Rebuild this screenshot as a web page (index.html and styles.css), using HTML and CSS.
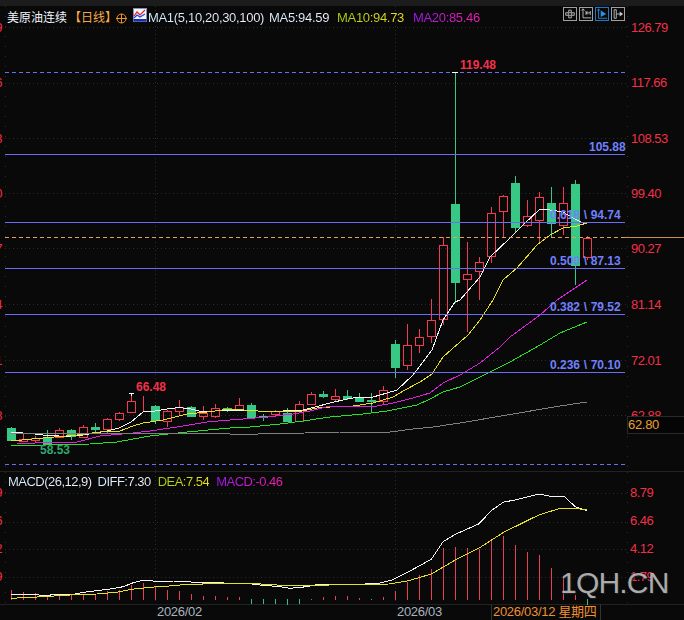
FILE: index.html
```html
<!DOCTYPE html>
<html lang="zh-CN">
<head>
<meta charset="utf-8">
<title>美原油连续 日线</title>
<link rel="stylesheet" href="styles.css">
</head>
<body>
<div class="app">
  <div class="topband"></div>
  <section class="pane price-pane">
    <div class="legend">
      <span class="title">美原油连续</span>
      <span class="period">【日线】</span>
      <svg class="ico-target" viewBox="0 0 11 11"><circle cx="5.5" cy="5.5" r="4.5"/><path d="M0 5.5H11M5.5 1V10"/></svg>
      <svg class="ico-ma" viewBox="0 0 14 14"><rect class="f" x=".5" y=".5" width="13" height="13"/><rect class="b" x=".5" y="11" width="13" height="2.5"/><path class="r" d="M1 8L4 4L7 7L12 2"/><path class="u" d="M1 10L4 7L7 9L12 6"/></svg>
      <span class="lg lg-ma1">MA1(5,10,20,30,100)</span>
      <span class="lg lg-ma5">MA5:94.59</span>
      <span class="lg lg-ma10">MA10:94.73</span>
      <span class="lg lg-ma20">MA20:85.46</span>
    </div>
    <div class="tools">
      <span class="tool"><svg viewBox="0 0 14 14"><path d="M5.5 2.500h3v3h-3zM5.500 8.500h3v3h-3zM2 5.500h3v3H2zM9 5.500h3v3H9z"/></svg></span>
      <span class="tool"><svg viewBox="0 0 14 14"><path d="M3.500 1V11.500H13M1.500 3L3.500 1L5.500 3M7 3.500V8M12 3.500V8M7 5.750H12M9 4L7.500 5.750L9 7.500"/></svg></span>
      <span class="tool tool-on"><svg viewBox="0 0 14 14"><path d="M3 1V12H13M1.500 3L3 1L4.500 3"/><path class="solid" d="M5.500 3L12 7L5.500 10.500Z"/></svg></span>
      <span class="tool"><svg viewBox="0 0 14 14"><path d="M2.500 2V12M5 2V12M2.500 2H5M2.500 12H5M5 7H11"/><path class="solid" d="M9 4L13 7L9 10Z"/></svg></span>
    </div>
    <svg class="chart chart-main" viewBox="0 6 684 466">
      <g class="grid">
        <path d="M5 27H627M5 83H627M5 138H627M5 193H627M5 248H627M5 304H627M5 360H627M5 415H627"/>
        <path d="M155 6V472M395 6V472"/>
      </g>
      <path class="axis" d="M5 6V472M627 6V472"/>
      <path class="rule" d="M0 471.500H684"/>
      <g id="candles"></g>
      <g id="mas"></g>
      <path class="level" d="M5 154H625M5 222H625M5 268H625M5 314H625M5 372H625"/>
      <path class="level dashed" d="M5 72.500H625M5 464.500H625"/>
      <path class="cur-dash" d="M5 237.500H625"/>
      <path class="cur-solid" d="M625 237.500H684"/>
      <path class="cross" d="M131 393V396M128.500 393H134M452 72.500H458"/>
      <g class="scale">
        <text x="2" y="32" text-anchor="end">126.79</text><text x="2" y="87" text-anchor="end">117.66</text><text x="2" y="143" text-anchor="end">108.53</text><text x="2" y="198" text-anchor="end">99.40</text><text x="2" y="253" text-anchor="end">90.27</text><text x="2" y="309" text-anchor="end">81.14</text><text x="2" y="365" text-anchor="end">72.01</text><text x="2" y="420" text-anchor="end">62.88</text>
        <text x="631" y="32">126.79</text><text x="631" y="87">117.66</text><text x="631" y="143">108.53</text><text x="631" y="198">99.40</text><text x="631" y="253">90.27</text><text x="631" y="309">81.14</text><text x="631" y="365">72.01</text><text x="631" y="420">62.88</text>
      </g>
      <text class="peak" x="460" y="69">119.48</text>
      <text class="peak" x="136" y="391">66.48</text>
      <text class="low" x="40" y="454">58.53</text>
      <g class="fib">
        <text x="589" y="151">105.88</text>
        <text x="550" y="219">0.618 \ 94.74</text>
        <text x="550" y="265">0.500 \ 87.13</text>
        <text x="550" y="311">0.382 \ 79.52</text>
        <text x="550" y="369">0.236 \ 70.10</text>
      </g>
    </svg>
    <div class="last-box">62.80</div>
  </section>
  <section class="pane macd-pane">
    <div class="legend legend-macd">
      <span class="lg lg-ma1">MACD(26,12,9)</span>
      <span class="lg lg-ma1">DIFF:7.30</span>
      <span class="lg lg-ma10">DEA:7.54</span>
      <span class="lg lg-ma20">MACD:-0.46</span>
    </div>
    <svg class="chart chart-macd" viewBox="0 472 684 133">
      <g class="grid">
        <path d="M5 493H627M5 522H627M5 549H627M5 577H627"/>
        <path d="M155 472V605M395 472V605"/>
      </g>
      <path class="axis" d="M5 472V605M627 472V605"/>
      <path class="rule" d="M0 604.500H684"/>
      <g id="hist"></g>
      <g id="macdlines"></g>
      <g class="scale">
        <text x="2" y="497" text-anchor="end">8.79</text><text x="2" y="525" text-anchor="end">6.46</text><text x="2" y="553" text-anchor="end">4.12</text><text x="2" y="581" text-anchor="end">1.79</text>
        <text x="630" y="497">8.79</text><text x="630" y="525">6.46</text><text x="630" y="553">4.12</text><text x="630" y="581">1.79</text>
      </g>
    </svg>
  </section>
  <div class="time-axis">
    <span class="t-label t-feb">2026/02</span>
    <span class="t-label t-mar">2026/03</span>
    <span class="t-cursor">2026/03/12 星期四</span>
  </div>
  <div class="watermark">1QH.CN</div>
</div>
<script src="app.js"></script>
</body>
</html>
```
FILE: styles.css
```css
* { box-sizing: border-box; }
html, body { margin: 0; height: 100%; background: #090909; overflow: hidden; }
.app {
  position: relative; width: 684px; height: 620px; display: flex; flex-direction: column;
  background: #090909; font-family: "Liberation Sans", "Noto Sans CJK SC", sans-serif; font-size: 13px;
}
.topband { height: 6px; background: #1c1c1c; flex: none; }
.pane { position: relative; flex: none; }
.price-pane { height: 466px; }
.macd-pane { height: 133px; }
.chart { position: absolute; inset: 0; width: 684px; display: block; }
.chart-main { height: 466px; }
.chart-macd { height: 133px; }
.legend {
  position: absolute; z-index: 2; left: 7px; top: 4px; height: 16px; display: flex; align-items: center;
  white-space: nowrap; line-height: 16px;
}
.title { color: #f2f6ff; width: 60px; font-size: 12px; }
.period { color: #f5a94a; width: 47px; margin-left: 2px; font-size: 12px; }
.ico-target { width: 11px; height: 11px; fill: none; stroke: #e8952e; stroke-width: 1; flex: none; }
.ico-ma { width: 14px; height: 14px; margin-left: 6px; margin-top: -6px; flex: none; }
.ico-ma .f { fill: #f4f4ff; stroke: #8890b0; stroke-width: 1; }
.ico-ma .b { fill: #1730a8; }
.ico-ma .r { fill: none; stroke: #e02020; stroke-width: 1.2; }
.ico-ma .u { fill: none; stroke: #2244dd; stroke-width: 1.2; }
.lg { -webkit-background-clip: text; background-clip: text; color: transparent; letter-spacing: -.32px; }
.lg-ma1 { background-image: linear-gradient(90deg, #d4ecff, #f2f2ff); margin-left: 1px; }
.lg-ma5 { background-image: linear-gradient(90deg, #d4ecff, #f2f2ff); margin-left: 5px; }
.lg-ma10 { background-image: linear-gradient(90deg, #a5cc10, #f0e020); margin-left: 8px; }
.lg-ma20 { background-image: linear-gradient(90deg, #9a18e8, #f020a8); margin-left: 9px; }
.legend-macd { left: 7px; top: 2px; }
.legend-macd .lg { letter-spacing: -.52px; }
.legend-macd .lg-ma1 + .lg-ma1 { margin-left: 6px; }
.legend-macd .lg-ma10 { margin-left: 7px; }
.legend-macd .lg-ma20 { margin-left: 7px; }
.tools { position: absolute; z-index: 2; right: 59px; top: 1px; display: flex; gap: 2px; }
.tool { width: 14px; height: 14px; border: 1px solid #a0a0a0; display: flex; }
.tool svg { width: 100%; height: 100%; fill: none; stroke: #c8c8c8; stroke-width: 1; }
.tool .solid { fill: #c8c8c8; stroke: none; }
.tool-on { border-color: #1e78c8; }
.tool-on svg { stroke: #2c90e0; }
.tool-on .solid { fill: #2c90e0; }
.grid path { fill: none; stroke: #2c2c2c; stroke-width: 1; stroke-dasharray: 1 3; shape-rendering: crispEdges; }
.axis { fill: none; stroke: #2c2c2c; stroke-width: 1; stroke-dasharray: 1 9; shape-rendering: crispEdges; }
.rule { fill: none; stroke: #222; stroke-width: 1; shape-rendering: crispEdges; }
.level { fill: none; stroke: #6c6cf5; stroke-width: 1; shape-rendering: crispEdges; }
.level.dashed { stroke-dasharray: 4 3; }
.cur-dash { fill: none; stroke: #e8a050; stroke-dasharray: 4 3; shape-rendering: crispEdges; }
.cur-solid { fill: none; stroke: #c89048; shape-rendering: crispEdges; }
.cross { fill: none; stroke: #fff; shape-rendering: crispEdges; }
.scale text { fill: #f03048; font-size: 13px; letter-spacing: -.5px; }
.peak { fill: #f5304a; font-size: 12px; font-weight: 700; }
.low { fill: #2aa870; font-size: 12px; font-weight: 700; }
.fib text { fill: #7080ff; font-size: 12px; font-weight: 700; word-spacing: .3px; }
.c-up { fill: none; stroke: #f23a55; stroke-width: 1; shape-rendering: crispEdges; }
.c-dn { fill: #36c884; stroke: #36c884; stroke-width: 1; shape-rendering: crispEdges; }
.ma { fill: none; stroke-width: 1; shape-rendering: crispEdges; }
.hbar-up { stroke: #e84058; stroke-width: 1; shape-rendering: crispEdges; }
.hbar-dn { stroke: #38c080; stroke-width: 1; shape-rendering: crispEdges; }
.last-box {
  position: absolute; left: 627px; top: 410px; width: 57px; height: 18px; z-index: 2; background: #050505;
  border: 1px solid #2a2a2a; border-right: 0; color: #e8a030; line-height: 16px; letter-spacing: -.3px;
}
.time-axis { flex: none; height: 15px; position: relative; color: #a8b4c0; }
.t-label, .t-cursor { position: absolute; top: -1px; line-height: 16px; white-space: nowrap; letter-spacing: -.3px; }
.t-feb { left: 157px; }
.t-mar { left: 397px; }
.t-cursor { left: 491px; width: 110px; padding-left: 1px; color: #f09030; border-left: 1px solid #333; border-right: 1px solid #333; }
.watermark {
  position: absolute; left: 560px; top: 565px; z-index: 3; font-size: 30px; line-height: 36px; letter-spacing: -.8px;
  color: rgba(205, 205, 205, .82); text-shadow: 1px 1px 1px #222;
}
```
FILE: app.js
```js
var NS = "http://www.w3.org/2000/svg";
function add(parent, tag, attrs) {
  var el = document.createElementNS(NS, tag);
  for (var k in attrs) el.setAttribute(k, attrs[k]);
  parent.appendChild(el);
  return el;
}
function pts(a) {
  var s = [];
  for (var i = 0; i < a.length; i += 2) s.push(a[i] + "," + a[i + 1]);
  return s.join(" ");
}
/* bodyTop, bodyBottom, wickTop, wickBottom, direction (1 = up, 0 = down) */
var K = [
 [428,440,427,440,0],[439,441,433,442,1],[438,440,436,443,1],[437,443,430,443,0],[430,437,428,438,1],
 [430,436,429,440,0],[427,437,425,437,1],[427,429,423,433,0],[419,429,418,433,1],[413,419,412,421,1],
 [401,412,393,413,1],[400,400,396,412,1],[406,420,405,424,0],[411,421,410,427,1],[407,411,400,415,1],
 [407,416,406,417,0],[413,416,406,420,1],[408,416,404,418,1],[408,410,407,412,0],[405,409,398,411,1],
 [405,417,403,418,0],[416,417,414,421,0],[411,414,410,417,1],[413,421,408,422,0],[404,421,401,422,1],
 [394,404,392,405,1],[394,396,391,398,0],[396,399,389,401,1],[396,398,390,400,0],[398,401,393,402,0],
 [400,401,393,412,0],[390,401,386,404,1],[344,367,340,378,0],[345,365,324,370,1],[337,345,329,353,1],
 [320,336,299,343,1],[245,319,237,325,1],[204,282,72,303,0],[274,279,242,332,1],[262,271,257,300,1],
 [213,256,207,263,1],[196,211,195,238,1],[183,227,176,233,0],[216,225,200,227,1],[197,220,192,242,1],
 [203,223,187,238,0],[203,225,187,235,1],[184,265,180,285,0],[238,257,236,260,1]
];
var g = document.getElementById("candles");
K.forEach(function (c, i) {
  var x = 11 + 12 * i;
  var cls = c[4] ? "c-up" : "c-dn";
  add(g, "path", { "class": cls, d: "M" + (x + .5) + " " + c[2] + "V" + c[0] + "M" + (x + .5) + " " + c[1] + "V" + c[3] });
  add(g, "rect", { "class": cls, x: x - 3.5, y: c[0] + .5, width: 8, height: Math.max(c[1] - c[0], 0) });
});
var MA = {
 "#f4f4f4": [11,432,23,433,35,434,47,435.500,59,436,71,436,83,435,95,433,107,431,119,428,131,422,143,412,155,411,167,409,179,407.500,191,409,203,412,215,411,230,410,258,411,283,411,303,410,315,407,330,403,347,399,360,397,373,397,387,393,397,390,413,375,432,350,443,320,455,302,460,300,480,277,490,257,510,238,523,225,540,209,550,210,563,212,573,218,583,223,587,223],
 "#e8e020": [11,441,43,438,77,435,100,432,120,431,133,426,143,423,163,420,187,414,207,412,230,409,258,411,282,411,302,411,317,408,330,407,353,406,373,403,393,397,405,390,420,382,432,374,443,357,460,342,468,335,480,320,493,300,503,280,517,268,537,245,550,235,563,228,577,226,587,223],
 "#e020e0": [17,444,53,442,77,442,100,436,133,433,150,431,177,427,207,422,230,420,243,419,267,417,293,414,310,411,330,406,353,406,377,406,393,403,413,398,430,393,443,383,460,375,480,363,500,347,510,337,540,315,557,300,587,280],
 "#28e028": [11,445,43,445,90,444,117,442,150,436,187,432,230,428,250,427,280,424,303,421,330,417,363,414,387,411,417,405,430,399,443,392,460,387,480,377,510,362,540,345,560,333,587,322],
 "#808080": [11,433,230,434,258,434,305,433,340,432,390,432,413,429,433,427,460,423,560,406,587,402]
};
var m = document.getElementById("mas");
for (var col in MA) add(m, "polyline", { "class": "ma", stroke: col, points: pts(MA[col]) });

/* histogram tops, in 3x zoom units of the 470 based crop */
var H = [360,366,368,376,372,376,372,372,364,360,345,340,352,360,362,372,378,378,381,381,-402,-402,-402,-405,-402,386,382,378,378,384,-390,380,362,335,316,298,235,231,234,238,214,198,225,246,255,294,320,375,-405];
var h = document.getElementById("hist");
H.forEach(function (v, i) {
  var x = 11.5 + 12 * i;
  var y = 470 + Math.abs(v) / 3;
  add(h, "line", { "class": v < 0 ? "hbar-dn" : "hbar-up", x1: x, x2: x, y1: v < 0 ? 599 : 599.500, y2: y });
});
var W = [33,373,110,373,125,378,160,374,220,373,250,367,290,362,330,357,370,350,400,338,430,331,460,333,520,333,560,335,600,338,740,340,780,345,840,350,870,355,920,350,950,344,1026,342,1096,342,1136,340,1176,330,1226,305,1294,268,1329,215,1366,193,1436,162,1476,120,1511,96,1546,90,1616,72,1646,78,1691,78,1726,110,1762,122];
var Y = [33,385,130,380,210,375,290,372,350,367,395,358,450,352,520,347,560,343,720,340,810,343,850,347,950,346,1026,344,1166,342,1226,332,1294,312,1366,270,1436,235,1511,187,1616,135,1681,115,1726,115,1762,120];
function zoomPts(a) {
  var o = [];
  for (var i = 0; i < a.length; i += 2) o.push(+(a[i] / 3).toFixed(1), +(470 + a[i + 1] / 3).toFixed(1));
  return pts(o);
}
var ml = document.getElementById("macdlines");
add(ml, "polyline", { "class": "ma", stroke: "#f4f4f4", points: zoomPts(W) });
add(ml, "polyline", { "class": "ma", stroke: "#e8e020", points: zoomPts(Y) });
```
